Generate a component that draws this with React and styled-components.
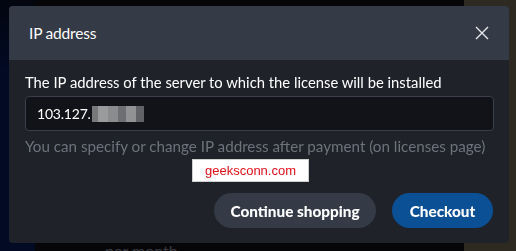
import React from "react";
import styled, { createGlobalStyle } from "styled-components";

const Global = createGlobalStyle`
  html, body { margin: 0; padding: 0; width: 100%; height: 100%; overflow: hidden; background: #060608; }
  body { font-family: Lato, "Noto Sans", sans-serif; }
  #root { height: 100%; }
  * { box-sizing: border-box; }
`;

const Page = styled.div`
  display: flex;
  height: 251px;
  width: 516px;
`;

const NavyCol = styled.div`
  width: 35px;
  background: linear-gradient(180deg, #03060f 0px, #020a24 70px, #020a24 100%);
`;

const MidCol = styled.div`
  flex: 1;
  display: flex;
  flex-direction: column;
  justify-content: flex-end;
  padding-left: 70px;
  background: #060608;
`;

const BehindText = styled.div`
  color: #3a3a40;
  font-size: 16px;
  line-height: 16px;
  height: 8px;
  overflow: visible;
  white-space: nowrap;
`;

const BrownCol = styled.div`
  width: 52px;
  background: #2e2a22;
`;

const Modal = styled.div`
  position: fixed;
  left: 9px;
  top: 6px;
  width: 500px;
  height: 237px;
  border-radius: 4px;
  overflow: hidden;
  background: #1f2229;
  display: flex;
  flex-direction: column;
`;

const Header = styled.div`
  height: 54px;
  background: #343a46;
  display: flex;
  align-items: center;
  justify-content: space-between;
  padding: 0 20px 0 20px;
`;

const Title = styled.div`
  color: #ffffff;
  font-size: 15.5px;
  letter-spacing: -0.2px;
`;

const CloseBtn = styled.button`
  border: none;
  background: transparent;
  padding: 0;
  width: 14px;
  height: 14px;
  display: flex;
  cursor: pointer;
`;

const Body = styled.div`
  padding: 13px 16px 0 16px;
  display: flex;
  flex-direction: column;
`;

const Label = styled.div`
  color: #ffffff;
  font-size: 14.8px;
  line-height: 18px;
  white-space: nowrap;
`;

const InputBox = styled.div`
  margin-top: 5px;
  height: 35px;
  width: 469px;
  background: #111318;
  border: 1px solid #3a3f4a;
  border-radius: 4px;
  display: flex;
  align-items: center;
  padding-left: 11px;
  color: #ffffff;
  font-size: 14px;
  letter-spacing: -0.2px;
`;

const Blur = styled.span`
  display: inline-block;
  width: 52px;
  height: 16px;
  margin-left: 1px;
  background: linear-gradient(90deg, #9a9a9c 0 6px, #c8c8ca 6px 16px, #b4b4b6 16px 26px, #8d8d90 26px 34px, #bdbdbf 34px 44px, #7d7d80 44px 52px);
  opacity: 0.75;
`;

const Hint = styled.div`
  margin-top: 6px;
  color: #6d727c;
  font-size: 15.2px;
  line-height: 18px;
  white-space: nowrap;
`;

const WatermarkRow = styled.div`
  display: flex;
  justify-content: center;
  margin-top: 4px;
  padding-right: 17px;
`;

const Watermark = styled.div`
  background: #ffffff;
  color: #e0101a;
  font-family: "Liberation Sans", Arial, sans-serif;
  font-size: 13px;
  height: 23px;
  width: 117px;
  display: flex;
  align-items: center;
  justify-content: center;
  border: 1px solid #cfcfcf;
`;

const Actions = styled.div`
  display: flex;
  justify-content: flex-end;
  gap: 16px;
  margin-top: 11px;
`;

const Btn = styled.button`
  height: 35px;
  border: none;
  border-radius: 18px;
  padding: 0;
  width: ${(p) => (p.$primary ? "101px" : "162px")};
  background: ${(p) => (p.$primary ? "#0b4f95" : "#343a46")};
  color: #ffffff;
  font-family: Lato, "Noto Sans", sans-serif;
  font-weight: 900;
  font-size: 15.3px;
  cursor: pointer;
`;

export default function App() {
  return (
    <>
      <Global />
      <Page>
        <NavyCol />
        <MidCol>
          <BehindText>per month</BehindText>
        </MidCol>
        <BrownCol />
      </Page>
      <Modal>
        <Header>
          <Title>IP address</Title>
          <CloseBtn aria-label="Close">
            <svg width="14" height="14" viewBox="0 0 14 14">
              <path d="M1 1 L13 13 M13 1 L1 13" stroke="#e6e8ec" strokeWidth="1.4" fill="none" />
            </svg>
          </CloseBtn>
        </Header>
        <Body>
          <Label>The IP address of the server to which the license will be installed</Label>
          <InputBox>
            103.127.<Blur />
          </InputBox>
          <Hint>You can specify or change IP address after payment (on licenses page)</Hint>
          <WatermarkRow>
            <Watermark>geeksconn.com</Watermark>
          </WatermarkRow>
          <Actions>
            <Btn>Continue shopping</Btn>
            <Btn $primary>Checkout</Btn>
          </Actions>
        </Body>
      </Modal>
    </>
  );
}
